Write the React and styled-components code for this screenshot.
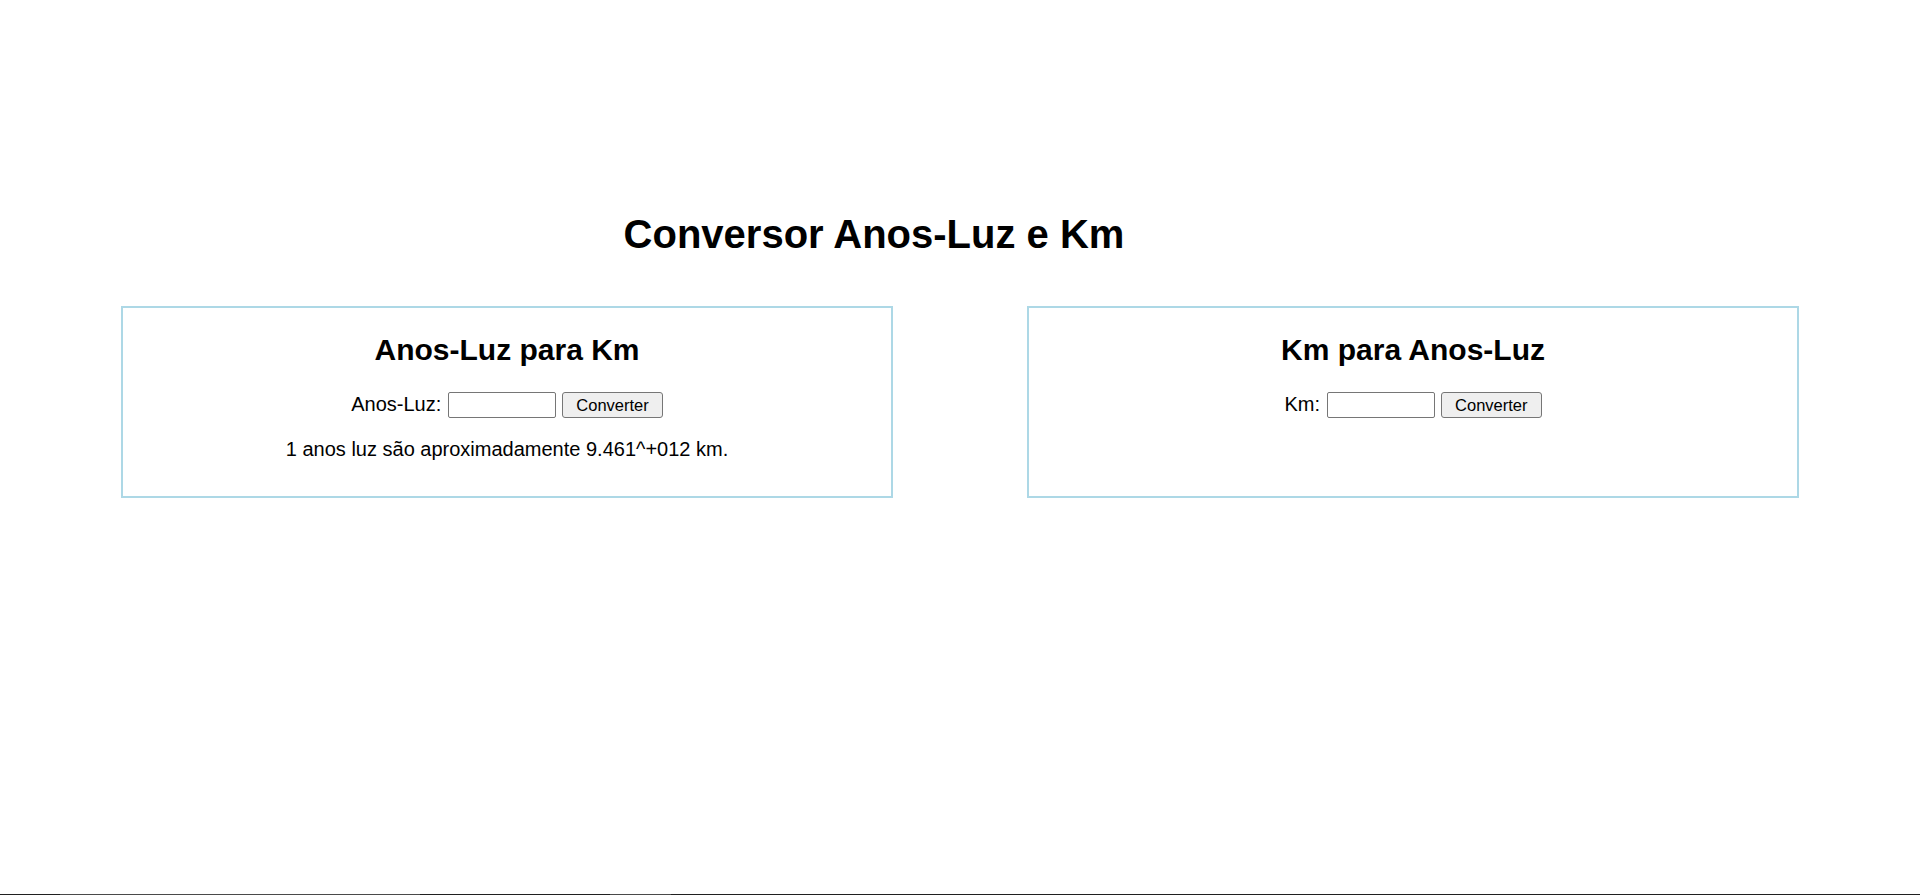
import React, { useState } from 'react';
import styled, { createGlobalStyle } from 'styled-components';

const GlobalStyle = createGlobalStyle`
    html, body {
        margin: 0;
        padding: 0;
        background: #fff;
    }
    body {
        font-family: "Liberation Sans", Arial, sans-serif;
        font-size: 20px;
        line-height: 23px;
        color: #000;
    }
`

const App = () => {

    const [anosLuz, setAnosLuz] = useState('')
    const [km, setKm] = useState('')
    const [resultKm, setResultKm] = useState('1 anos luz são aproximadamente 9.461^+012 km.')
    const [resultAnos, setResultAnos] = useState('')

    // anos-luz -> km
    const converterAnos = () => {
        const v = parseFloat(anosLuz)
        if (isNaN(v)) return
        setResultKm(`${v} anos luz são aproximadamente ${(v * 9.461e12).toExponential(3)} km.`)
    }
    // km -> anos-luz
    const converterKm = () => {
        const v = parseFloat(km)
        if (isNaN(v)) return
        setResultAnos(`${v} km são aproximadamente ${(v / 9.461e12).toExponential(3)} anos luz.`)
    }

    return (
        <Page>
            <GlobalStyle />
            <Main>
                <Title>Conversor Anos-Luz e Km</Title>
                <Boxes>
                    <Box>
                        <BoxTitle>Anos-Luz para Km</BoxTitle>
                        <Row>
                            <Label htmlFor="anos">Anos-Luz:</Label>
                            <Input id="anos" type="text" value={anosLuz} onChange={e => setAnosLuz(e.target.value)} />
                            <Button onClick={converterAnos}>Converter</Button>
                        </Row>
                        <Result>{resultKm}</Result>
                    </Box>
                    <Box>
                        <BoxTitle>Km para Anos-Luz</BoxTitle>
                        <Row>
                            <Label htmlFor="km">Km:</Label>
                            <Input id="km" type="text" value={km} onChange={e => setKm(e.target.value)} />
                            <Button onClick={converterKm}>Converter</Button>
                        </Row>
                        <Result>{resultAnos}</Result>
                    </Box>
                </Boxes>
            </Main>
            <Taskbar />
        </Page>
    );
};

const Page = styled.div`
    min-height: 100vh;
    display: flex;
    flex-direction: column;
`
const Main = styled.div`
    flex: 1;
    padding-top: 211px;
`
const Title = styled.h1`
    margin: 0;
    padding-right: 172px;
    text-align: center;
    font-size: 40px;
    line-height: 46px;
    font-weight: 700;
`
const Boxes = styled.div`
    display: flex;
    justify-content: space-between;
    gap: 134px;
    margin-top: 49px;
    padding: 0 121px;
`
const Box = styled.div`
    flex: 1;
    box-sizing: border-box;
    border: 2px solid #add8e6;
    padding: 0 0 15px;
    text-align: center;
`
const BoxTitle = styled.h2`
    margin: 25px 0;
    font-size: 30px;
    line-height: 34px;
    font-weight: 700;
`
const Row = styled.div`
    display: flex;
    justify-content: center;
    align-items: center;
    gap: 6px;
    height: 26px;
`
const Label = styled.label`
    font-size: 20px;
    margin-top: -2px;
`
const Input = styled.input`
    box-sizing: border-box;
    width: 108px;
    height: 26px;
    margin: 0 0 0 1px;
    padding: 1px 3px;
    border: 1px solid #767676;
    border-radius: 2px;
    font-family: "Liberation Sans", Arial, sans-serif;
    font-size: 16px;
    background: #fff;
`
const Button = styled.button`
    box-sizing: border-box;
    height: 26px;
    padding: 0 13px;
    border: 1px solid #767676;
    border-radius: 3px;
    background: #efefef;
    color: #000;
    font-family: "Liberation Sans", Arial, sans-serif;
    font-size: 16.5px;
    cursor: pointer;
`
const Result = styled.p`
    margin: 20px 0;
    min-height: 23px;
`
// dark strip at the bottom edge of the screen
const Taskbar = styled.div`
    height: 1px;
    background: linear-gradient(to right,
        #202020 0 60px, #4a4a4a 60px 420px, #202020 420px 610px,
        #4a4a4a 610px 671px, #202020 671px 100%);
`

export default App;
